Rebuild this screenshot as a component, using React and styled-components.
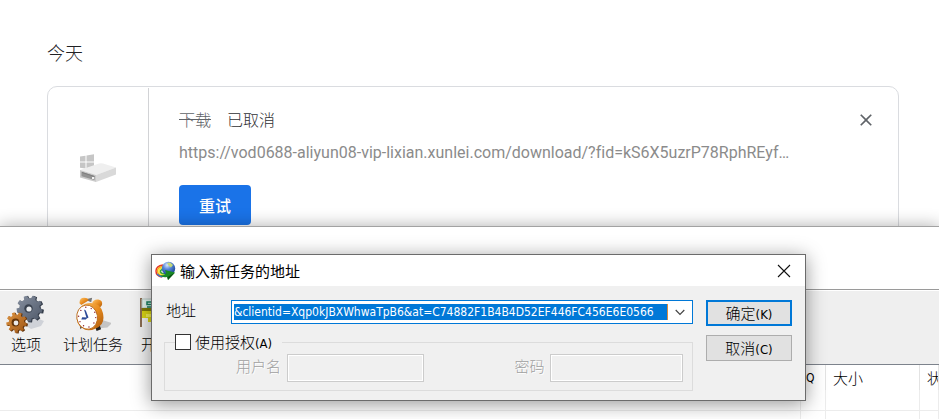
import React from "react";
import styled, { createGlobalStyle } from "styled-components";

const CJK = `"Noto Sans CJK SC", sans-serif`;
const LATIN_UI = `"DejaVu Sans Condensed", ${CJK}`;

const GlobalStyle = createGlobalStyle`
  *, *::before, *::after { box-sizing: border-box; }
  body { margin: 0; background: #fff; overflow: hidden; }
  button, input { font: inherit; color: inherit; margin: 0; padding: 0; }
`;

const Desktop = styled.div`
  position: relative;
  height: 100vh;
  overflow: hidden;
  font-family: ${CJK};
  color: #000;
`;

/* ---------- Browser downloads page ---------- */

const DownloadsPage = styled.main`
  padding: 38px 40px 0 47px;
`;

const DayHeading = styled.h2`
  margin: 0 0 20px;
  font-size: 18px;
  font-weight: 300;
  line-height: 28px;
  color: #202124;
`;

const DownloadCard = styled.article`
  display: flex;
  min-height: 180px;
  border: 1px solid #dadce0;
  border-radius: 10px;
`;

const FileIconCell = styled.div`
  flex: 0 0 101px;
  display: flex;
  justify-content: center;
  padding-top: 64px;
  margin-top: 1px;
  border-right: 1px solid #d2d3d6;
`;

const DownloadInfo = styled.div`
  flex: 1;
  min-width: 0;
  padding: 20px 20px 0 30px;
`;

const TitleRow = styled.div`
  display: flex;
  align-items: flex-start;
  gap: 16px;
  height: 26px;
  font-size: 16px;
  font-weight: 300;
  line-height: 24px;
`;

const FileName = styled.s`
  color: #5f6368;
`;

const Status = styled.span`
  flex: 1;
  color: #303134;
`;

const CardClose = styled.button`
  display: flex;
  padding: 3px 2px;
  border: 0;
  background: none;
  color: #5f6368;
`;

const SourceLink = styled.a`
  display: block;
  width: 620px;
  max-width: 100%;
  margin-top: 8px;
  overflow: hidden;
  font-family: Roboto, ${CJK};
  font-size: 16px;
  font-variant-ligatures: none;
  line-height: 24px;
  color: #8b8b8b;
  text-decoration: none;
  text-overflow: ellipsis;
  white-space: nowrap;
`;

const RetryButton = styled.button`
  height: 40px;
  margin-top: 20px;
  padding: 0 20px;
  border: 0;
  border-radius: 4px;
  background: #1a73e8;
  color: #fff;
  font-size: 16px;
  font-weight: 500;
`;

/* ---------- Download manager window ---------- */

const ManagerWindow = styled.section`
  position: absolute;
  inset: 226px -1px -1px -1px;
  display: flex;
  flex-direction: column;
  border: 1px solid #a2a2a2;
  background: #fff;
  box-shadow: 0 0 16px rgba(0, 0, 0, 0.32);
`;

const MenuArea = styled.div`
  flex: 0 0 62px;
`;

const Toolbar = styled.div`
  flex: 0 0 76px;
  display: flex;
  gap: 2px;
  padding-top: 4px;
  border-top: 1px solid #9a9a9a;
  border-bottom: 1px solid #7d838c;
  background: #efefef;
  box-shadow: inset 0 1px #fff;
`;

const ToolButton = styled.button`
  display: flex;
  flex: 0 0 ${(p) => p.$width}px;
  flex-direction: column;
  align-items: center;
  border: 0;
  background: none;
  font-size: 15px;
  font-weight: 300;
  line-height: 20px;
  white-space: nowrap;

  svg { height: 40px; display: block; }
`;

const FileTable = styled.table`
  width: 100%;
  table-layout: fixed;
  border-collapse: separate;
  border-spacing: 0;
`;

const HeadCell = styled.th`
  width: ${(p) => (p.$width ? `${p.$width}px` : "auto")};
  height: 25px;
  padding: 0 0 0 ${(p) => (p.$narrow ? 5 : 7)}px;
  overflow: hidden;
  border-right: 1px solid #e3e3e3;
  font-family: ${(p) => (p.$narrow ? LATIN_UI : CJK)};
  font-size: ${(p) => (p.$narrow ? 12 : 15)}px;
  font-weight: ${(p) => (p.$narrow ? 400 : 300)};
  line-height: 20px;
  text-align: left;
  white-space: nowrap;
`;

const BodyCell = styled.td`
  height: 21px;
  padding: 0;
  border-right: 1px solid #ececec;
  border-bottom: 1px solid #ececec;
`;

/* ---------- Address dialog ---------- */

const Dialog = styled.form`
  position: absolute;
  top: 254px;
  left: 151px;
  width: 655px;
  border: 1px solid #6b6b6b;
  background: #f0f0f0;
  box-shadow: 0 3px 18px rgba(0, 0, 0, 0.42);
  font-size: 15px;
  line-height: 20px;
`;

const TitleBar = styled.header`
  display: flex;
  align-items: center;
  gap: 4px;
  height: 31px;
  padding: 0 14px 0 3px;
  background: #fff;
`;

const DialogTitle = styled.h1`
  flex: 1;
  margin: 0;
  font-size: 15px;
  font-weight: 400;
`;

const TitleClose = styled.button`
  display: flex;
  border: 0;
  background: none;
`;

const DialogBody = styled.div`
  display: flex;
  gap: 13px;
  padding: 14px 13px 9px 12px;
`;

const FormColumn = styled.div`
  flex: 1;
  min-width: 0;
`;

const AddressRow = styled.div`
  display: flex;
  align-items: flex-start;
  font-weight: 300;
`;

const AddressLabel = styled.label`
  flex: 0 0 67px;
  padding-left: 2px;
`;

const ComboBox = styled.div`
  flex: 1;
  min-width: 0;
  display: flex;
  align-items: center;
  height: 24px;
  padding-left: 2px;
  border: 1px solid #0078d7;
  background: #fff;
`;

const AddressInput = styled.input`
  flex: 1;
  min-width: 0;
  height: 16px;
  border: 0;
  border-radius: 0;
  border-right: 1px solid #d98b3c;
  background: #0078d7;
  color: #fff;
  font-family: ${LATIN_UI};
  font-size: 12px;
  font-weight: 400;
  line-height: 16px;
`;

const ComboArrow = styled.button`
  flex: 0 0 24px;
  display: flex;
  justify-content: center;
  border: 0;
  background: none;
`;

const AuthGroup = styled.fieldset`
  display: flex;
  align-items: center;
  min-width: 0;
  margin: 8px 0 0;
  padding: 2px 9px 8px 71px;
  border: 1px solid #dcdcdc;
`;

const AuthLegend = styled.legend`
  display: flex;
  align-items: center;
  gap: 4px;
  height: 20px;
  margin-left: -61px;
  padding: 0 10px 0 0;
  font-weight: 300;
`;

const CheckBox = styled.input`
  appearance: none;
  width: 16px;
  height: 16px;
  border: 1px solid #333;
  background: #fff;
`;

const Mnemonic = styled.span`
  font-family: ${LATIN_UI};
  font-size: 13px;
  font-weight: 400;
  line-height: 16px;
`;

const DisabledLabel = styled.label`
  flex: 0 0 auto;
  height: 24px;
  margin-right: 6px;
  color: #a0a0a0;
  font-weight: 300;
  text-shadow: 1px 1px #fff;
`;

const DisabledInput = styled.input`
  flex: ${(p) => p.$share} 1 0;
  min-width: 0;
  height: 28px;
  margin-right: ${(p) => p.$after || 0}px;
  border: 1px solid #cccccc;
  border-radius: 0;
  background: #f0f0f0;
  box-shadow: inset 0 0 0 1px #fff;
`;

const ButtonColumn = styled.div`
  flex: 0 0 86px;
  display: flex;
  flex-direction: column;
  gap: 9px;
`;

const DialogButton = styled.button`
  height: 26px;
  border: ${(p) => (p.$primary ? "2px solid #0078d7" : "1px solid #adadad")};
  background: #e1e1e1;
  font-weight: 300;
  line-height: 20px;
`;

/* ---------- Drawings ---------- */

const DriveIcon = () => (
  <svg width="38" height="32" viewBox="0 0 38 32" aria-hidden="true">
    <path d="M1 4.5 6.500 3.700V9.600H1zM7.500 3.500 15 2.300V9.600H7.500zM1 10.600H6.500V16.500L1 15.700zM7.500 10.600H15V17.500L7.500 16.600z" fill="#c6c6c6" />
    <path d="M1 18 20 11.500Q22 11 24 11.500L37 15.500 17 23z" fill="#efefef" />
    <path d="M1 18 17 23V30L1 25.500z" fill="#c9c9c9" />
    <path d="M17 23 37 15.500V22.500L17 30z" fill="#d9d9d9" />
    <path d="M2.500 19.800 15.500 24V28L2.500 24.300z" fill="#929292" />
    <path d="M3 20 15.500 24V25L3 21z" fill="#7e7e7e" />
    <rect x="13" y="25" width="2" height="2" fill="#f2f2f2" />
  </svg>
);

const CloseIcon = () => (
  <svg width="20" height="20" viewBox="0 0 24 24" fill="currentColor" aria-hidden="true">
    <path d="M19 6.41 17.590 5 12 10.590 6.410 5 5 6.410 10.590 12 5 17.590 6.410 19 12 13.410 17.590 19 19 17.590 13.410 12z" />
  </svg>
);

const TitleCloseIcon = () => (
  <svg width="14" height="14" viewBox="0 0 14 14" stroke="#111" strokeWidth="1.1" aria-hidden="true">
    <path d="M1 1 13 13M13 1 1 13" />
  </svg>
);

const ChevronIcon = () => (
  <svg width="10" height="7" viewBox="0 0 10 7" fill="none" stroke="#444" strokeWidth="1.2" aria-hidden="true">
    <path d="M.7 1 5 5.300 9.300 1" />
  </svg>
);

const gearPath = (cx, cy, outer, inner, teeth) => {
  const step = (Math.PI * 2) / teeth;
  const at = (r, a) => `${(cx + r * Math.cos(a)).toFixed(2)} ${(cy + r * Math.sin(a)).toFixed(2)}`;
  let d = "";
  for (let i = 0; i < teeth; i += 1) {
    const a = i * step + 0.2;
    d += `${i ? "L" : "M"}${at(inner, a - step * 0.32)}L${at(outer, a - step * 0.2)}L${at(outer, a + step * 0.2)}L${at(inner, a + step * 0.32)}`;
  }
  return `${d}Z`;
};

const GearsIcon = () => (
  <svg width="42" height="40" viewBox="0 0 42 40" aria-hidden="true">
    <defs>
      <linearGradient id="steel" x1="0" y1="0" x2="1" y2="1">
        <stop offset="0" stopColor="#8790a0" />
        <stop offset="1" stopColor="#4e5868" />
      </linearGradient>
      <linearGradient id="bronze" x1="0" y1="0" x2="1" y2="1">
        <stop offset="0" stopColor="#df9440" />
        <stop offset="1" stopColor="#9c5516" />
      </linearGradient>
    </defs>
    <path d="M20 31 29 23 39 27 36 32 26 35z" fill="#cfd2d8" />
    <path d={gearPath(25.500, 15, 13.500, 10.500, 9)} fill="#343c49" />
    <path d={gearPath(24.500, 14.500, 13, 10.300, 9)} fill="url(#steel)" />
    <circle cx="23.500" cy="14.500" r="4.200" fill="#39424f" />
    <circle cx="24" cy="15" r="2.600" fill="#eceef0" />
    <path d={gearPath(12.500, 29, 10.500, 8, 9)} fill="#62330b" />
    <path d={gearPath(11.500, 28.500, 10.300, 7.800, 9)} fill="url(#bronze)" />
    <circle cx="10.500" cy="28.500" r="3.900" fill="#633409" />
    <circle cx="11" cy="29" r="2.400" fill="#eceae8" />
  </svg>
);

const ClockIcon = () => (
  <svg width="36" height="40" viewBox="0 0 40 40" aria-hidden="true">
    <defs>
      <linearGradient id="brass" x1="0" y1="0" x2="1" y2="1">
        <stop offset="0" stopColor="#ffc66b" />
        <stop offset="0.5" stopColor="#e98d20" />
        <stop offset="1" stopColor="#a8560a" />
      </linearGradient>
    </defs>
    <path d="M24 36 31 27 41 30 36 35z" fill="#c4c4c4" />
    <path d="M22 33 27 31 29 37 24 39z" fill="#222" />
    <path d="M5 31 9 34 6 37z" fill="#4f4f4f" />
    <path d="M11 4 19 2 18 7z" fill="#777" />
    <path d="M5 8Q5 2 10 2T15 5L7 10z" fill="url(#brass)" />
    <path d="M19 8Q21 3 26 4T30 10L27 14z" fill="url(#brass)" />
    <path d="M14 8Q28 6 31 19T23 36Q13 41 6 34T4 16Q7 9 14 8z" fill="url(#brass)" />
    <ellipse cx="13.500" cy="23.500" rx="11.500" ry="13.500" transform="rotate(-9 13.500 23.500)" fill="#fff" stroke="#b96a1a" />
    <g fill="#8e2230">
      <circle cx="12" cy="12.500" r=".8" /><circle cx="18" cy="14" r=".8" /><circle cx="22" cy="18" r=".8" />
      <circle cx="23" cy="24" r=".8" /><circle cx="21" cy="30" r=".8" /><circle cx="15.500" cy="34.500" r=".8" />
      <circle cx="9.500" cy="33" r=".8" /><circle cx="5.500" cy="28.500" r=".8" /><circle cx="4" cy="22.500" r=".8" />
      <circle cx="6.500" cy="16" r=".8" />
    </g>
    <path d="M10 15 12 16 15 24 13 25z" fill="#2c4a98" />
    <path d="M14 24 8 23.500 7 26 12 26z" fill="#2c4a98" />
  </svg>
);

const QueueIcon = () => (
  <svg width="64" height="40" viewBox="0 0 64 40" aria-hidden="true">
    <path d="M2 4V33" stroke="#8a6c52" strokeWidth="2" />
    <path d="M3 5H40V14H3z" fill="#e2f3ee" stroke="#b9c9c4" />
    <path d="M13 8H8V10.500H13V13H8" fill="none" stroke="#16805f" strokeWidth="1.500" />
    <path d="M3 14H40V20H30V28H9V24H3z" fill="#d9d414" />
    <path d="M3 14H40V17H3z" fill="#817c08" />
    <path d="M7 20H30V23H7z" fill="#f2ee52" />
  </svg>
);

const GlobeIcon = () => (
  <svg width="21" height="20" viewBox="0 0 21 20" aria-hidden="true">
    <defs>
      <radialGradient id="globe" cx="0.4" cy="0.25" r="0.8">
        <stop offset="0" stopColor="#d8e6ff" />
        <stop offset="0.4" stopColor="#5585d8" />
        <stop offset="1" stopColor="#123a86" />
      </radialGradient>
    </defs>
    <g fill="none" strokeWidth="1.500">
      <path d="M8 4Q1 5 1 10T7 16" stroke="#e5352b" />
      <path d="M8 5.500Q2.500 6 2.500 10T8 15" stroke="#f5a51b" />
      <path d="M8 7Q4 7 4 10T9 14" stroke="#f3e935" />
      <path d="M8 8.500Q5.500 8.500 5.500 10.500T10 13" stroke="#35a83a" />
    </g>
    <circle cx="13.500" cy="7.500" r="6.700" fill="url(#globe)" />
    <path d="M12 2 15 1.500 18 4 16 6.500 14 5z" fill="#c3d878" />
    <path d="M2 13Q6 17 10 15" fill="none" stroke="#2f79cf" strokeWidth="1.200" />
    <path d="M10 9 20 11.500 13 19 12 16Q8 17 5 14.500 10 14.500 11 12z" fill="#188a26" />
    <path d="M20 11.500 13 19 12.500 16z" fill="#0c5216" />
  </svg>
);

/* ---------- Screen ---------- */

const SOURCE_URL =
  "https://vod0688-aliyun08-vip-lixian.xunlei.com/download/?fid=kS6X5uzrP78RphREyf…";
const ADDRESS = "&clientid=Xqp0kJBXWhwaTpB6&at=C74882F1B4B4D52EF446FC456E6E0566";

const tools = [
  { label: "选项", width: 52, Icon: GearsIcon },
  { label: "计划任务", width: 78, Icon: ClockIcon },
  { label: "开始队列", width: 74, Icon: QueueIcon },
];

const columns = [
  { label: "" },
  { label: "Q", width: 25, narrow: true },
  { label: "大小", width: 94 },
  { label: "状", width: 19 },
];

export default function App() {
  return (
    <Desktop>
      <GlobalStyle />
      <DownloadsPage>
        <DayHeading>今天</DayHeading>
        <DownloadCard>
          <FileIconCell>
            <DriveIcon />
          </FileIconCell>
          <DownloadInfo>
            <TitleRow>
              <FileName>下载</FileName>
              <Status>已取消</Status>
              <CardClose type="button" aria-label="关闭">
                <CloseIcon />
              </CardClose>
            </TitleRow>
            <SourceLink href="#">{SOURCE_URL}</SourceLink>
            <RetryButton type="button">重试</RetryButton>
          </DownloadInfo>
        </DownloadCard>
      </DownloadsPage>

      <ManagerWindow>
        <MenuArea />
        <Toolbar>
          {tools.map(({ label, width, Icon }) => (
            <ToolButton key={label} type="button" $width={width}>
              <Icon />
              {label}
            </ToolButton>
          ))}
        </Toolbar>
        <FileTable>
          <thead>
            <tr>
              {columns.map((c) => (
                <HeadCell key={c.label} $width={c.width} $narrow={c.narrow}>
                  {c.label}
                </HeadCell>
              ))}
            </tr>
          </thead>
          <tbody>
            {[0, 1].map((row) => (
              <tr key={row}>
                {columns.map((c) => (
                  <BodyCell key={c.label} />
                ))}
              </tr>
            ))}
          </tbody>
        </FileTable>
      </ManagerWindow>

      <Dialog onSubmit={(e) => e.preventDefault()}>
        <TitleBar>
          <GlobeIcon />
          <DialogTitle>输入新任务的地址</DialogTitle>
          <TitleClose type="button" aria-label="关闭">
            <TitleCloseIcon />
          </TitleClose>
        </TitleBar>
        <DialogBody>
          <FormColumn>
            <AddressRow>
              <AddressLabel htmlFor="address">地址</AddressLabel>
              <ComboBox>
                <AddressInput id="address" defaultValue={ADDRESS} />
                <ComboArrow type="button" aria-label="地址">
                  <ChevronIcon />
                </ComboArrow>
              </ComboBox>
            </AddressRow>
            <AuthGroup>
              <AuthLegend>
                <CheckBox type="checkbox" id="auth" />
                <label htmlFor="auth">
                  使用授权<Mnemonic>(A)</Mnemonic>
                </label>
              </AuthLegend>
              <DisabledLabel htmlFor="user">用户名</DisabledLabel>
              <DisabledInput id="user" disabled $share={137} $after={90} />
              <DisabledLabel htmlFor="password">密码</DisabledLabel>
              <DisabledInput id="password" type="password" disabled $share={132} />
            </AuthGroup>
          </FormColumn>
          <ButtonColumn>
            <DialogButton type="submit" $primary>
              确定<Mnemonic>(K)</Mnemonic>
            </DialogButton>
            <DialogButton type="button">
              取消<Mnemonic>(C)</Mnemonic>
            </DialogButton>
          </ButtonColumn>
        </DialogBody>
      </Dialog>
    </Desktop>
  );
}
